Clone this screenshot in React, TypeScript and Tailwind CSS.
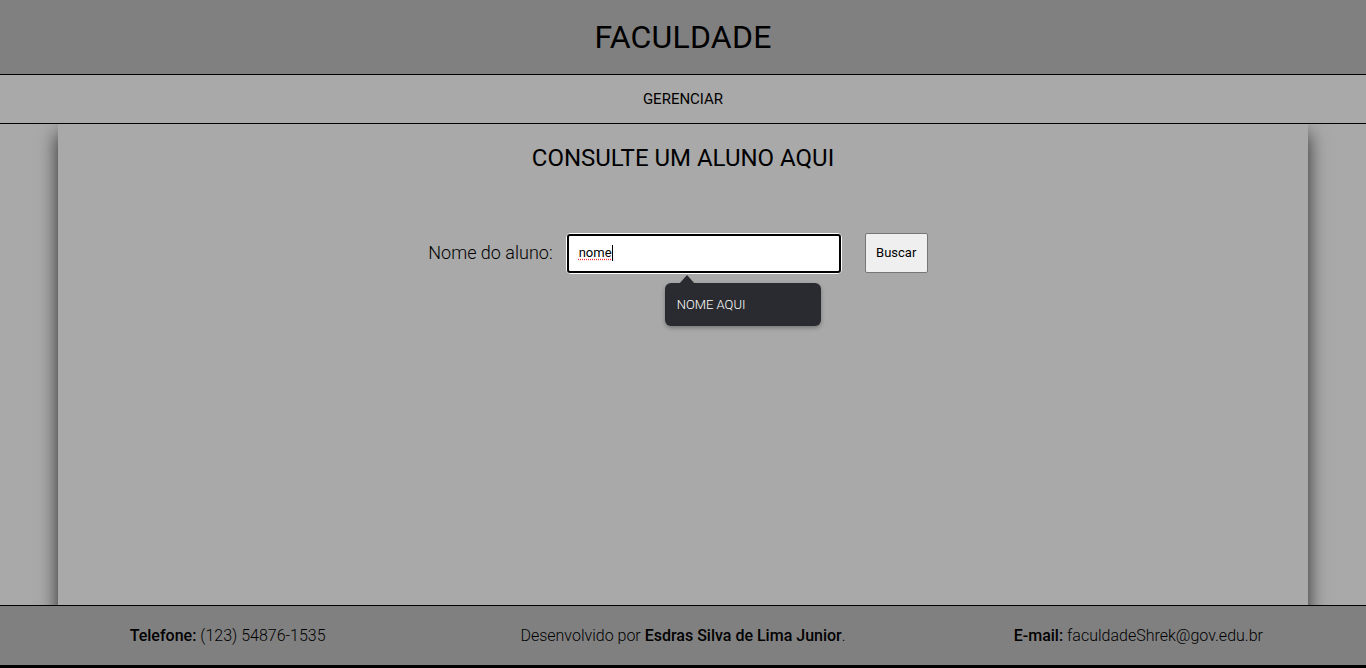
import React from "react";

export default function App() {
  return (
    <div className="min-h-screen bg-[#a9a9a9] text-black font-light" style={{ fontFamily: "Roboto, 'Liberation Sans', sans-serif" }}>
      {/* header */}
      <header className="h-[75px] bg-[#808080] border-b border-black flex items-center justify-center">
        <h1 className="text-[32px] leading-none font-normal tracking-[0.2px]">FACULDADE</h1>
      </header>

      {/* nav */}
      <nav className="h-[49px] bg-[#a9a9a9] border-b border-black flex items-center justify-center">
        <a className="text-[15px] leading-none font-normal">GERENCIAR</a>
      </nav>

      {/* main */}
      <main className="h-[481px] overflow-hidden">
        <section className="mx-auto w-[1250px] h-[520px] bg-[#a9a9a9] shadow-[0_10px_18px_rgba(0,0,0,0.75)] pt-[20px]">
          <h2 className="text-center text-[24px] leading-[28px] font-normal">CONSULTE UM ALUNO AQUI</h2>

          <div className="mt-[61px] pr-[10px] flex items-center justify-center">
            <label className="text-[18px] leading-none mr-[14px]">Nome do aluno:</label>
            <div className="relative">
              <div className="w-[274px] h-[39px] bg-white rounded-[4px] ring-1 ring-white">
                <div className="w-full h-full border-2 border-black rounded-[3px] flex items-center pl-[10px] text-[13px] font-normal">
                  <span className="underline decoration-dotted decoration-red-500 underline-offset-2">nome</span>
                  <span className="w-px h-[16px] bg-black" />
                </div>
              </div>
              {/* tooltip */}
              <div className="absolute left-[98px] top-[49px]">
                <div className="relative w-[156px] h-[43px] bg-[#2a2b30] rounded-[6px] shadow-[0_2px_4px_rgba(0,0,0,0.3)] flex items-center pl-[12px]">
                  <span className="absolute -top-[8px] left-[14px] w-0 h-0 border-l-[8px] border-r-[8px] border-b-[9px] border-l-transparent border-r-transparent border-b-[#2a2b30]" />
                  <span className="text-white text-[13px] leading-none">NOME AQUI</span>
                </div>
              </div>
            </div>
            <button className="ml-[24px] w-[63px] h-[40px] bg-[#efefef] border border-[#767676] rounded-[2px] text-[13px] font-normal">
              Buscar
            </button>
          </div>
        </section>
      </main>

      {/* footer */}
      <footer className="h-[63px] bg-[#808080] border-t border-black border-b-[3px] border-b-black flex items-center text-[16px]">
        <div className="flex-1 text-center">
          <span className="font-medium">Telefone:</span> (123) 54876-1535
        </div>
        <div className="flex-1 text-center">
          Desenvolvido por <span className="font-medium">Esdras Silva de Lima Junior</span>.
        </div>
        <div className="flex-1 text-center">
          <span className="font-medium">E-mail:</span> faculdadeShrek@gov.edu.br
        </div>
      </footer>
    </div>
  );
}
